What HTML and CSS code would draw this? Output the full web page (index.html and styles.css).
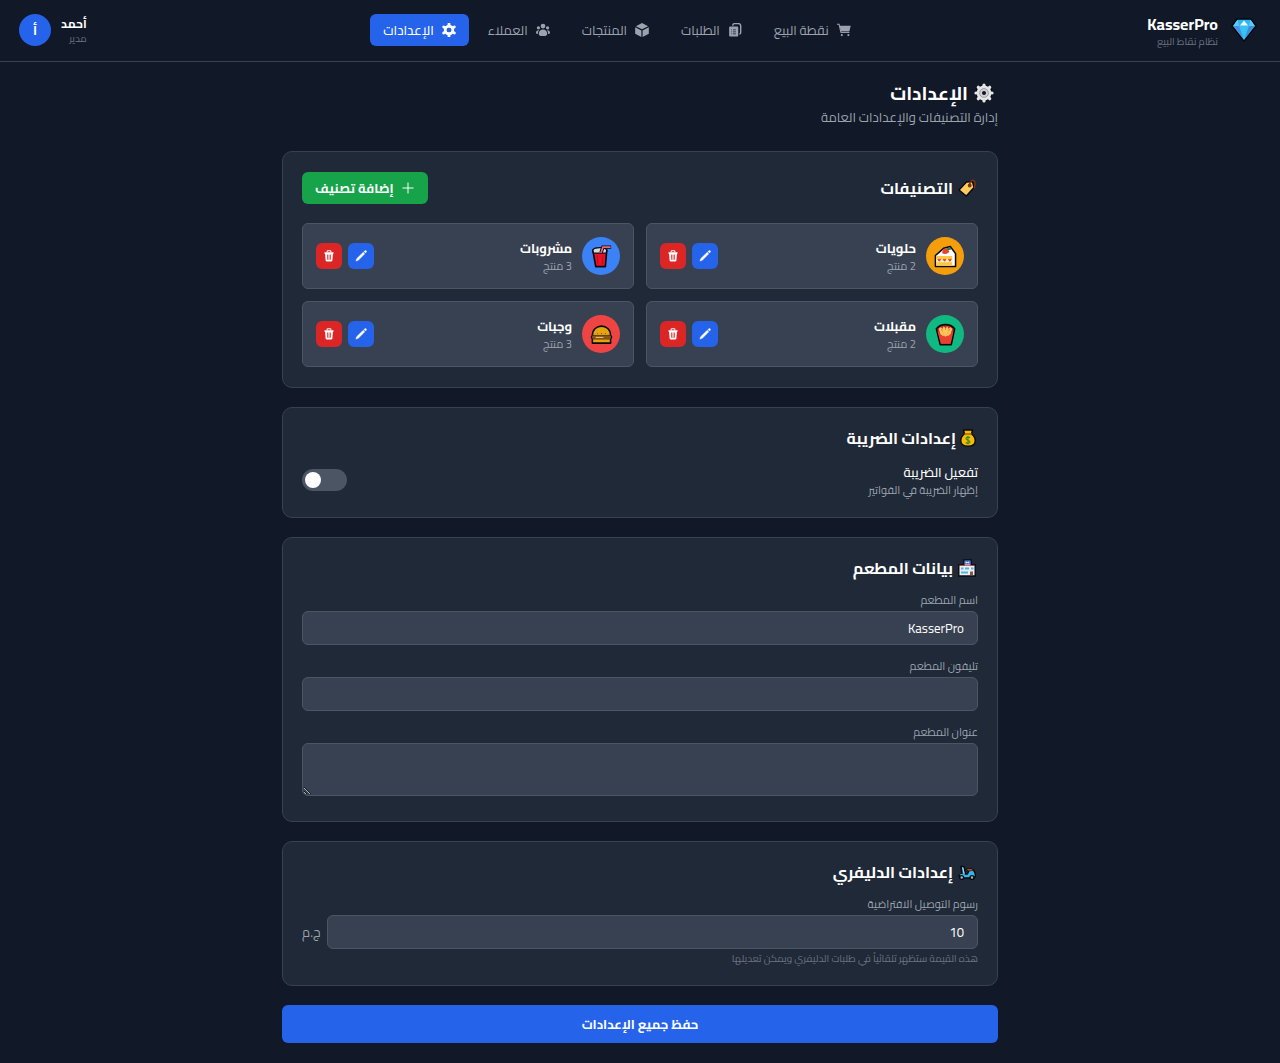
FILE: index.html
```html
<!DOCTYPE html>
<html lang="ar" dir="rtl">
<head>
<meta charset="utf-8">
<meta name="viewport" content="width=device-width, initial-scale=1">
<title>KasserPro</title>
<link rel="stylesheet" href="styles.css">
</head>
<body>
<svg class="sprite" aria-hidden="true">
  <symbol id="pencil" viewBox="0 0 16 16"><path d="M1.200 14.800l1-3.200L11 3l2 2-8.600 8.800zM12 2l1-.9a1.300 1.300 0 0 1 1.900 1.900L14 4z" fill="currentColor" stroke="currentColor" stroke-width=".6" stroke-linejoin="round"/></symbol>
  <symbol id="trash" viewBox="0 0 16 16"><path d="M5.500 3V2a1 1 0 0 1 1-1h3a1 1 0 0 1 1 1v1" fill="none" stroke="currentColor" stroke-width="1.400"/><path fill="currentColor" fill-rule="evenodd" d="M2 3h12v2h-.7l-.8 9a1.500 1.500 0 0 1-1.500 1.300H5A1.500 1.500 0 0 1 3.500 14L2.700 5H2zM5.400 6l.4 7h1l-.4-7zm2.100 0v7h1V6zm2.100 0l-.4 7h1l.4-7z"/></symbol>
</svg>

<header class="topbar">
  <div class="brand">
    <svg class="brand-logo" viewBox="0 0 26 26" aria-hidden="true">
      <path d="M6 2h14l5 7-12 15L1 9z" fill="#29b6f6" stroke="#05070d" stroke-width="1.600" stroke-linejoin="round"/>
      <path d="M2.200 9h6L13 23z" fill="#4a90e2"/><path d="M23.800 9h-6L13 23z" fill="#3f8ddb"/>
      <path d="M8.200 9h9.600L13 23z" fill="#35c4f5"/><path d="M6.500 2.800L8.200 9h-6zM19.500 2.800L17.800 9h6z" fill="#5ccbf8"/>
      <path d="M13 3.500L9 8.500h8z" fill="#fff"/>
    </svg>
    <div>
      <div class="brand-name">KasserPro</div>
      <div class="brand-note">نظام نقاط البيع</div>
    </div>
  </div>

  <nav class="nav">
    <a class="nav-link" href="#pos">
      <svg class="icon" viewBox="0 0 16 16" aria-hidden="true"><path d="M0 1.500h2.400l2 9h9.600" fill="none" stroke="currentColor" stroke-width="1.200"/><path d="M3 3h12.700l-1.500 6.200H4.400zM4.600 10h9.600v1.200H4.600z" fill="currentColor"/><circle cx="5.500" cy="13.800" r="1.200" fill="currentColor"/><circle cx="13" cy="13.800" r="1.200" fill="currentColor"/></svg>
      نقطة البيع</a>
    <a class="nav-link" href="#orders">
      <svg class="icon" viewBox="0 0 16 16" aria-hidden="true"><path d="M5.500 3V2.500A2 2 0 0 1 7.500.700h4.500A2.500 2.500 0 0 1 14.500 3.200V11a1.500 1.500 0 0 1-1.500 1.500" fill="none" stroke="currentColor" stroke-width="1.600"/><path fill="currentColor" fill-rule="evenodd" d="M2.500 4h8A1.200 1.200 0 0 1 11.700 5.200v9A1.200 1.200 0 0 1 10.500 15.500h-8A1.200 1.200 0 0 1 1.300 14.200v-9A1.200 1.200 0 0 1 2.500 4zM3.800 7.300v.9h.8v-.9zm1.800 0v.9h3.400v-.9zm-1.800 2.400v.9h.8v-.9zm1.800 0v.9h3.400v-.9zm-1.800 2.300v.9h.8V12zm1.800 0v.9h3.400V12z"/></svg>
      الطلبات</a>
    <a class="nav-link" href="#products">
      <svg class="icon" viewBox="0 0 16 16" aria-hidden="true"><path d="M8 0l7 3.600L8 7.200 1 3.600zM.2 4.900l7.100 3.600V16L.2 12.200zM15.800 4.900L8.700 8.500V16l7.100-3.800z" fill="currentColor"/></svg>
      المنتجات</a>
    <a class="nav-link" href="#customers">
      <svg class="icon" viewBox="0 0 16 16" aria-hidden="true"><g fill="currentColor"><circle cx="8" cy="3.500" r="2.700"/><circle cx="2.800" cy="5.500" r="1.900"/><circle cx="13.200" cy="5.500" r="1.900"/><path d="M8 7.500c3 0 4.800 2.300 4.800 4.800 0 1.500-1 2.500-2.300 2.500h-5c-1.300 0-2.300-1-2.300-2.500C3.200 9.800 5 7.500 8 7.500zM3.500 8.300C2.500 9.600 2 11 2.200 12.700 1 12.700 0 12 0 10.800c0-1.700 1.600-3 3.500-2.500zM12.500 8.300c1 1.300 1.500 2.700 1.300 4.400 1.200 0 2.200-.7 2.200-1.900 0-1.700-1.600-3-3.500-2.500z"/></g></svg>
      العملاء</a>
    <a class="nav-link active" href="#settings" aria-current="page">
      <svg class="icon" viewBox="0 0 16 16" aria-hidden="true"><circle cx="8" cy="8" r="4.300" fill="none" stroke="currentColor" stroke-width="3.200"/><path d="M8 1v2.500M8 12.500V15M1.900 4.500l2.200 1.200M11.900 10.300l2.200 1.200M1.900 11.500l2.200-1.200M11.900 5.700l2.200-1.200" stroke="currentColor" stroke-width="3.200" stroke-linecap="round"/><circle cx="8" cy="8" r="2.700" fill="#2563eb"/></svg>
      الإعدادات</a>
  </nav>

  <div class="user">
    <div>
      <div class="user-name">أحمد</div>
      <div class="user-role">مدير</div>
    </div>
    <div class="avatar">أ</div>
  </div>
</header>

<main class="page">
  <div class="page-head">
    <h1>
      <svg class="emoji-lg" viewBox="0 0 20 20" aria-hidden="true"><path d="M10 1.700v16.600M1.700 10h16.600M4.100 4.100l11.800 11.800M15.900 4.100L4.100 15.900" stroke="#080a10" stroke-width="5.200" stroke-linejoin="round"/><circle cx="10" cy="10" r="8.300" fill="#080a10"/><path d="M10 2v16M2 10h16M4.300 4.300l11.400 11.400M15.700 4.300L4.300 15.700" stroke="#e8e8ea" stroke-width="3.200" stroke-linecap="round"/><circle cx="10" cy="10" r="7.400" fill="#e3e4e6"/><circle cx="10" cy="10" r="4.400" fill="#cfd1d5" stroke="#8b9099" stroke-width=".8"/><circle cx="10" cy="10" r="2" fill="#10141d"/></svg>
      الإعدادات</h1>
    <p>إدارة التصنيفات والإعدادات العامة</p>
  </div>

  <section class="card card-categories">
    <div class="card-head">
      <h2>
        <svg class="emoji" viewBox="0 0 18 18" aria-hidden="true"><path d="M8.500 3l6-.5 1.500 6-7.700 8.500L1 11z" fill="#ffcb5c" stroke="#080a10" stroke-width="1.400" stroke-linejoin="round"/><circle cx="11.700" cy="6.500" r="1.900" fill="#7a3a18"/><path d="M11.700 6.500C11.500 1 16 0 16.900 3c.4 1.800 0 4-.6 6.500" fill="none" stroke="#7c3412" stroke-width="1.500"/></svg>
        التصنيفات</h2>
      <button class="btn-add" type="button">
        <svg class="icon" viewBox="0 0 14 14" aria-hidden="true"><path d="M7 1.500v11M1.500 7h11" stroke="currentColor" stroke-width="1"/></svg>
        إضافة تصنيف</button>
    </div>
    <div class="categories">
      <article class="category">
        <div class="badge amber"><svg viewBox="0 0 24 24" aria-hidden="true"><path d="M1.500 11L10 3.500l7-2 5.500 7.500v13.500h-21z" fill="#fff" stroke="#080a10" stroke-width="1.600" stroke-linejoin="round"/><path d="M2.500 11.500h16.500v10H2.500z" fill="#ffc83d"/><path d="M2.500 14.500h16.500v3.500H2.500z" fill="#fff0c9"/><path d="M4 15h3l-1.500 2zM9.500 15h3L11 17zM15 15h3l-1.500 2z" fill="#e8412d" stroke="#e8412d"/><path d="M8.500 8.500c0-3 2-5 5.500-5l2 3.500c-2 2.500-5 3-7.500 1.500z" fill="#e8412d"/><path d="M13 4l3.500-2 2 2.500-3.500 1z" fill="#2c7a38"/></svg></div>
        <div class="category-text"><h3>حلويات</h3><p>2 منتج</p></div>
        <div class="actions"><button class="btn-icon edit" type="button" aria-label="تعديل"><svg><use href="#pencil"/></svg></button><button class="btn-icon delete" type="button" aria-label="حذف"><svg><use href="#trash"/></svg></button></div>
      </article>
      <article class="category">
        <div class="badge blue"><svg viewBox="0 0 24 24" aria-hidden="true"><path d="M3 5.500h14.500l-1.500 17h-10z" fill="#e81224" stroke="#080a10" stroke-width="1.700" stroke-linejoin="round"/><path d="M3 5C5 2 15 2 17.500 5L17 8.500H3.500z" fill="#d8d8dc" stroke="#080a10" stroke-width="1.400" stroke-linejoin="round"/><path d="M11.500 8l2-5.800H22" fill="none" stroke="#080a10" stroke-width="3.600"/><path d="M11.500 8l2-5.800H21.500" fill="none" stroke="#ef6a70" stroke-width="1.800"/><path d="M7.500 11l.7 9M13.500 11l-.5 9" stroke="#b90e1d"/></svg></div>
        <div class="category-text"><h3>مشروبات</h3><p>3 منتج</p></div>
        <div class="actions"><button class="btn-icon edit" type="button" aria-label="تعديل"><svg><use href="#pencil"/></svg></button><button class="btn-icon delete" type="button" aria-label="حذف"><svg><use href="#trash"/></svg></button></div>
      </article>
      <article class="category">
        <div class="badge green"><svg viewBox="0 0 24 24" aria-hidden="true"><path d="M2.500 6C7 .3 17 .3 21.500 6L18 22.500H6.500z" fill="#c9302c" stroke="#080a10" stroke-width="1.700" stroke-linejoin="round"/><path d="M5 6l2.500 9h9L19 6l-2-1.500L15 6l-1-2.500-2 2-2-2L9 6 7 4.500z" fill="#ffc45c"/><path d="M8 6l1.500 6M12 5.500V13M16 6l-1.500 6" stroke="#d36b22" stroke-width=".8"/><path d="M3.700 8.500c2 .5 3 5 8.300 5s6.300-4.500 8.300-5L17.300 21.700H7.200z" fill="#e8412d"/><path d="M8 8l1.500 5M12 7v7M16 8l-1.500 5" stroke="#ffc45c" stroke-width="1.600"/></svg></div>
        <div class="category-text"><h3>مقبلات</h3><p>2 منتج</p></div>
        <div class="actions"><button class="btn-icon edit" type="button" aria-label="تعديل"><svg><use href="#pencil"/></svg></button><button class="btn-icon delete" type="button" aria-label="حذف"><svg><use href="#trash"/></svg></button></div>
      </article>
      <article class="category">
        <div class="badge red"><svg viewBox="0 0 24 24" aria-hidden="true"><path d="M2.500 13C2.500 0 21.500 0 21.500 13l1 1.500-1 2.500v4h-19v-4l-1-2.500z" fill="#e5a50a" stroke="#080a10" stroke-width="1.600" stroke-linejoin="round"/><path d="M2.500 13.500h19v2.800h-19z" fill="#8a531d"/><path d="M2 13h20M2.500 16.700h19" stroke="#4a2a0e" stroke-width=".9"/><path d="M6 15h8" stroke="#f3d08d"/><path d="M7.500 11h1M11.500 11h1M15.500 11h1" stroke="#7c4a1a"/></svg></div>
        <div class="category-text"><h3>وجبات</h3><p>3 منتج</p></div>
        <div class="actions"><button class="btn-icon edit" type="button" aria-label="تعديل"><svg><use href="#pencil"/></svg></button><button class="btn-icon delete" type="button" aria-label="حذف"><svg><use href="#trash"/></svg></button></div>
      </article>
    </div>
  </section>

  <section class="card">
    <h2 class="tight">
      <svg class="emoji" viewBox="0 0 18 18" aria-hidden="true"><path d="M4.500 1h9l-1 4c2.300 1.500 3.700 4 3.700 6.700 0 3.600-2.700 5.500-7.200 5.500S1.800 15.300 1.800 11.700C1.800 9 3.200 6.500 5.500 5z" fill="#fcb900" stroke="#080a10" stroke-width="1.400" stroke-linejoin="round"/><path d="M5 5h8" stroke="#8a5512" stroke-width="1.200"/><path d="M11 8.700C9.500 7.500 7 8 7 9.600c0 1.800 4 1.300 4 3.200 0 1.600-2.700 1.900-4.200.7M9 7v8.500" fill="none" stroke="#298c34" stroke-width="1.100"/></svg>
      إعدادات الضريبة</h2>
    <div class="switch-row">
      <label for="tax"><span class="switch-title">تفعيل الضريبة</span><span class="switch-note">إظهار الضريبة في الفواتير</span></label>
      <input class="switch" type="checkbox" role="switch" id="tax">
    </div>
  </section>

  <section class="card">
    <h2>
      <svg class="emoji" viewBox="0 0 18 18" aria-hidden="true"><path d="M.8 6H6V1h7v5h4.200v11H.8z" fill="#f0edf0" stroke="#080a10" stroke-width="1.400"/><path d="M6.500 1.500h6v4h-6z" fill="#3d67c9"/><path d="M8 2.500v2M10.800 2.500v2M8 3.500h2.800" stroke="#fff" stroke-width=".8"/><path d="M1.500 6.500h15" stroke="#d84a51" stroke-width=".8"/><path d="M3 8.500h2.500v2H3zM7 8.500h4v2H7zM13 8.500h2.500v2H13zM3 12.500h7v2H3z" fill="#48b7e8"/><path d="M12 12.500h3V16h-3z" fill="#8c5540"/></svg>
      بيانات المطعم</h2>
    <div class="field">
      <label for="name">اسم المطعم</label>
      <input class="control" type="text" id="name" value="KasserPro">
    </div>
    <div class="field">
      <label for="phone">تليفون المطعم</label>
      <input class="control" type="tel" dir="rtl" id="phone">
    </div>
    <div class="field">
      <label for="address">عنوان المطعم</label>
      <textarea class="control" id="address"></textarea>
    </div>
  </section>

  <section class="card">
    <h2>
      <svg class="emoji" viewBox="0 0 18 18" aria-hidden="true"><path d="M3 3.500h3l1.500 7.500h2l1.500-3.500 4-.5c1.500 1 2.300 3.500 2.300 6l-1.500 2H2L1 12.500l3-2z" fill="#32b5e8" stroke="#080a10" stroke-width="1.600" stroke-linejoin="round"/><path d="M8 5.500h6l1.500 2.500h-5.500z" fill="#b94a32" stroke="#080a10" stroke-width=".8"/><path d="M1.500 12c1-1.500 3.500-1.700 5 1h3.500l1.500-4.500 3.500-.5c1 1.200 1.700 3 1.500 5l-4 1H6z" fill="#32b5e8"/><circle cx="3.700" cy="14.500" r="1.900" fill="#9fb3c0" stroke="#080a10" stroke-width="1.300"/><circle cx="14" cy="14.500" r="1.900" fill="#9fb3c0" stroke="#080a10" stroke-width="1.300"/><path d="M4.700 4.500l1.500 6" stroke="#a5e4fb"/></svg>
      إعدادات الدليفري</h2>
    <label class="label" for="fee">رسوم التوصيل الافتراضية</label>
    <div class="fee-row">
      <input class="control" type="text" inputmode="decimal" id="fee" value="10" aria-describedby="fee-note">
      <span>ج.م</span>
    </div>
    <p class="hint" id="fee-note">هذه القيمة ستظهر تلقائياً في طلبات الدليفري ويمكن تعديلها</p>
  </section>

  <button class="btn-save" type="button">حفظ جميع الإعدادات</button>
</main>
</body>
</html>
```
FILE: styles.css
```css
* { box-sizing: border-box; margin: 0; }

body {
  background: #111827;
  color: #fff;
  font: 13px/18px Cairo, Roboto, "DejaVu Sans", sans-serif;
}

button, input, textarea { font: inherit; color: inherit; border: 0; }
button { cursor: pointer; }
svg { display: block; flex: none; }
.sprite { width: 0; height: 0; position: absolute; }

.topbar {
  display: flex;
  align-items: center;
  justify-content: space-between;
  padding: 12px 19px 13px;
  border-bottom: 1px solid #374151;
}

.brand, .user, .nav { display: flex; align-items: center; }
.brand { gap: 13px; padding-right: 4px; }
.brand-logo { width: 26px; height: 26px; }
.brand-name { font-size: 16px; line-height: 24px; font-weight: 700; }
.brand-note, .user-role { font-size: 10px; line-height: 12px; color: #6b7280; }

.nav { gap: 6px; }
.nav-link {
  display: flex;
  align-items: center;
  gap: 8px;
  height: 32px;
  padding: 0 13px;
  border-radius: 6px;
  color: #9ca3af;
  text-decoration: none;
}
.nav-link.active { background: #2563eb; color: #fff; font-weight: 500; }
.icon { width: 14px; height: 14px; }

.user { gap: 10px; }
.user-name { font-size: 12px; font-weight: 700; }
.avatar {
  width: 32px;
  height: 32px;
  border-radius: 50%;
  background: #2563eb;
  font-weight: 700;
  line-height: 32px;
  text-align: center;
}

.page {
  display: flex;
  flex-direction: column;
  gap: 19px;
  max-width: 754px;
  margin: 0 auto;
  padding: 19px 19px 20px;
}

.page-head { margin-bottom: 6px; color: #9ca3af; }
h1, h2 { display: flex; align-items: center; color: #fff; font-weight: 700; }
h1 { gap: 6px; padding-right: 4px; margin-bottom: 3px; font-size: 19px; line-height: 24px; }
h2 { gap: 5px; padding-right: 2px; font-size: 16px; line-height: 22px; margin-bottom: 13px; }
h2.tight { gap: 3px; padding-right: 1px; }
.emoji-lg { width: 20px; height: 20px; }
.emoji { width: 18px; height: 18px; }

.card {
  padding: 19px;
  border: 1px solid #374151;
  border-radius: 10px;
  background: #1f2937;
}
.card-categories { padding-block: 20px; }
.card-head {
  display: flex;
  align-items: center;
  justify-content: space-between;
  margin-bottom: 19px;
}
.card-head h2 { margin: 0; }

.btn-add {
  display: flex;
  align-items: center;
  gap: 7px;
  height: 32px;
  padding: 0 13px;
  border-radius: 6px;
  background: #16a34a;
  font-weight: 700;
}

.categories { display: grid; grid-template-columns: 1fr 1fr; gap: 12px; }
.category {
  display: flex;
  align-items: center;
  gap: 10px;
  padding: 13px;
  border: 1px solid #4b5563;
  border-radius: 6px;
  background: #374151;
}
.badge {
  display: grid;
  place-items: center;
  width: 38px;
  height: 38px;
  border-radius: 50%;
}
.badge svg { width: 23px; height: 23px; }
.amber { background: #f59e0b; }
.blue { background: #3b82f6; }
.green { background: #10b981; }
.red { background: #ef4444; }
.category-text { flex: 1; }
h3 { font-size: 13px; line-height: 20px; font-weight: 700; }
.category-text p { font-size: 11px; line-height: 16px; color: #9ca3af; }
.actions { display: flex; gap: 6px; }
.btn-icon {
  display: grid;
  place-items: center;
  width: 26px;
  height: 26px;
  padding: 0;
  border-radius: 6px;
}
.btn-icon svg { width: 12px; height: 12px; }
.edit { background: #2563eb; }
.delete { background: #dc2626; }

.switch-row { display: flex; align-items: center; justify-content: space-between; }
.switch-title, .switch-note { display: block; }
.switch-title { line-height: 20px; font-weight: 500; }
.switch-note { font-size: 11px; line-height: 16px; color: #9ca3af; }
.switch {
  appearance: none;
  display: flex;
  align-items: center;
  justify-content: flex-end;
  width: 45px;
  height: 22px;
  padding: 0 3px;
  border-radius: 11px;
  background: #4b5563;
}
.switch::before {
  content: "";
  width: 16px;
  height: 16px;
  border-radius: 50%;
  background: #fff;
}
.switch:checked { justify-content: flex-start; background: #2563eb; }

.field + .field { margin-top: 13px; }
.field:last-child { margin-bottom: 6px; }
.field label, .label {
  display: block;
  margin-bottom: 3px;
  font-size: 11px;
  line-height: 16px;
  color: #9ca3af;
}
.control {
  display: block;
  width: 100%;
  height: 34px;
  padding: 0 13px;
  border: 1px solid #4b5563;
  border-radius: 6px;
  background: #374151;
}
textarea.control { height: 53px; padding: 6px 13px; resize: vertical; }

.fee-row { display: flex; align-items: center; gap: 6px; color: #9ca3af; }
.fee-row .control { flex: 1; color: #fff; }
.hint { margin-top: 3px; font-size: 10px; line-height: 14px; color: #6b7280; }

.btn-save {
  height: 38px;
  border-radius: 6px;
  background: #2563eb;
  font-weight: 700;
}
```
